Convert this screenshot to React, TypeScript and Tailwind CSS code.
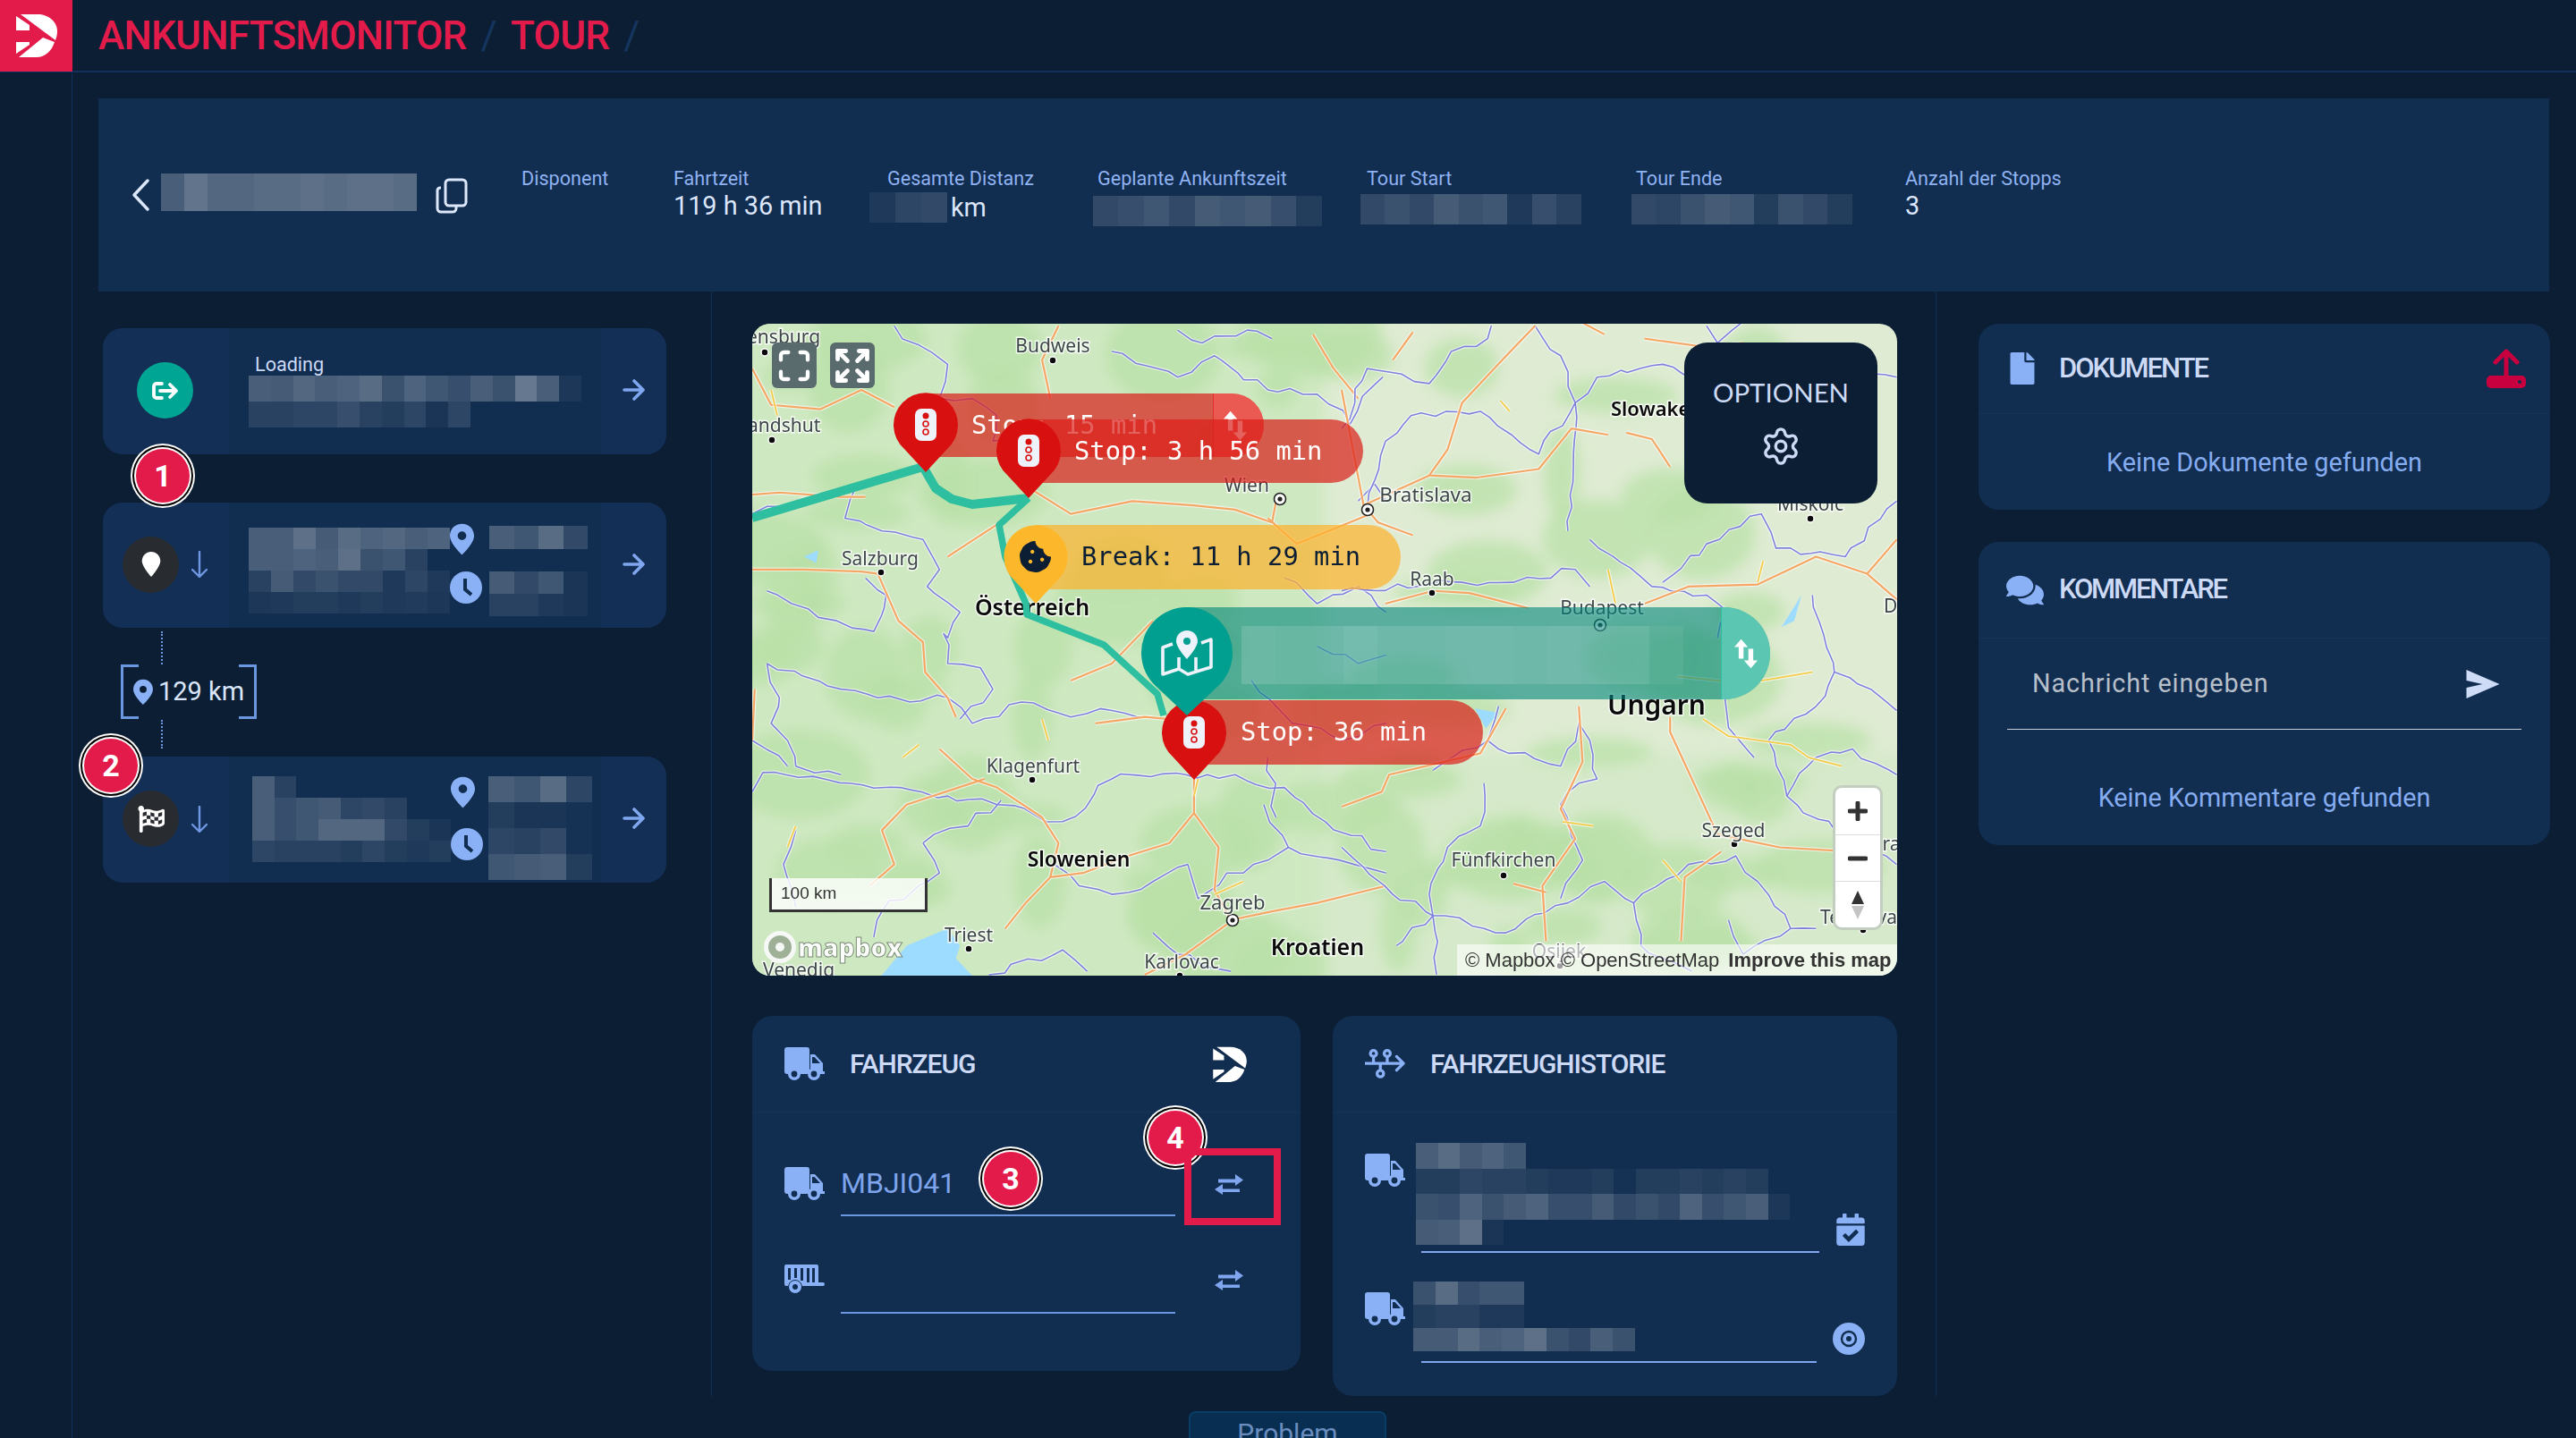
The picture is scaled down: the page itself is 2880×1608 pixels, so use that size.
import React from 'react';
import { Expand, Maximize, Settings } from 'lucide-react';
import { FaCookieBite, FaFlagCheckered, FaComments, FaFile, FaCalendarCheck } from 'react-icons/fa';

// ---- small drawings ----

const Logo = ({ className }: { className: string }) => (
  <svg viewBox="0 0 46 49" className={className} fill="currentColor">
    <path d="M5 1H24C36 1 46 9 46 20C46 24 45 27 44 30Z" />
    <path d="M0 3L15 13V19H0Z" />
    <path d="M0 32H15V35L0 45Z" />
    <path d="M30 27L43 32C40 42 32 49 23 49H3Z" />
  </svg>
);

const Truck = () => (
  <svg viewBox="0 0 45 37" className="w-[45px] h-[37px] shrink-0">
    <rect x="0" y="0" width="28" height="30" rx="3" fill="#8ab0f5" />
    <path d="M29 8H34L43 18V27H45V30H29Z" fill="#8ab0f5" />
    <path d="M31 11H33.5L40 18H31Z" fill="#112d50" />
    <circle cx="11" cy="30" r="7" fill="#8ab0f5" />
    <circle cx="11" cy="30" r="3.4" fill="#112d50" />
    <circle cx="33" cy="30" r="7" fill="#8ab0f5" />
    <circle cx="33" cy="30" r="3.4" fill="#112d50" />
  </svg>
);

const Trailer = () => (
  <svg viewBox="0 0 45 33" className="w-[45px] h-[33px] shrink-0">
    <path d="M2 0H36a2 2 0 0 1 2 2V20H43a2 2 0 0 1 0 4H8L2 24a2 2 0 0 1-2-2V2a2 2 0 0 1 2-2Z" fill="#8ab0f5" />
    <g fill="#112d50">
      <rect x="4" y="4" width="3" height="13" />
      <rect x="11" y="4" width="3" height="11" />
      <rect x="18" y="4" width="3" height="14" />
      <rect x="25" y="4" width="3" height="16" />
      <rect x="31" y="4" width="3" height="16" />
    </g>
    <circle cx="12" cy="25" r="7.5" fill="#8ab0f5" stroke="#112d50" strokeWidth="1" />
    <circle cx="12" cy="25" r="3" fill="#112d50" />
  </svg>
);

const Swap = () => (
  <svg viewBox="0 0 32 24" className="w-[32px] h-[24px]" fill="#7fa6ee">
    <path d="M4 10.5V6.5H23V1L32 7.5L23 14V10.5Z" />
    <path d="M28 13.5V17.5H9V12L0 18L9 24V21H28Z" />
  </svg>
);

const Pin = ({ className = 'w-[27px] h-[36px]' }: { className?: string }) => (
  <svg viewBox="0 0 28 36" className={className} fill="#8ab0f5">
    <path fillRule="evenodd" d="M14 0C6 0 0 6 0 14C0 23 14 36 14 36S28 23 28 14C28 6 22 0 14 0ZM14 9a5 5 0 1 1 0 10a5 5 0 0 1 0-10Z" />
  </svg>
);

const Clock = () => (
  <svg viewBox="0 0 36 36" className="w-[36px] h-[36px]">
    <circle cx="18" cy="18" r="18" fill="#8ab0f5" />
    <path d="M17 8V20L24 26" fill="none" stroke="#112d50" strokeWidth="4" />
  </svg>
);

const ArrowR = () => (
  <svg viewBox="0 0 25 24" className="w-[25px] h-[24px]" fill="none" stroke="#7fa6ee" strokeWidth="3.6" strokeLinecap="round" strokeLinejoin="round">
    <path d="M2 12H23M13 2L23 12L13 22" />
  </svg>
);

const ArrowD = () => (
  <svg viewBox="0 0 18 30" className="w-[18px] h-[30px]" fill="none" stroke="#6f97e3" strokeWidth="2.4" strokeLinecap="round" strokeLinejoin="round">
    <path d="M9 1V29M1 21L9 29L17 21" />
  </svg>
);

const SwapVert = ({ className }: { className: string }) => (
  <svg viewBox="0 0 24 30" className={className} fill="white">
    <path d="M0 8L7 0L14 8H9.5V20H4.5V8Z" />
    <path d="M14.5 10H19.5V22H24L17 30L10 22H14.5Z" />
  </svg>
);

const StopLight = () => (
  <svg viewBox="0 0 24 36" className="w-[24px] h-[36px]">
    <rect width="24" height="36" rx="7" fill="#eef2fa" />
    <circle cx="12" cy="8" r="3.5" fill="#d81010" />
    <circle cx="12" cy="17" r="3" fill="none" stroke="#d81010" strokeWidth="1.6" />
    <circle cx="12" cy="26" r="3" fill="none" stroke="#d81010" strokeWidth="1.6" />
  </svg>
);

const MarkerShape = ({ fill }: { fill: string }) => (
  <svg viewBox="0 0 72 89" className="absolute inset-0 w-full h-full">
    <path d="M36 89L12 63A36 36 0 1 1 60 63Z" fill={fill} />
  </svg>
);

const Badge = ({ n, className }: { n: number; className: string }) => (
  <div className={`absolute w-[72px] h-[72px] rounded-full bg-white p-[2px] ${className}`}>
    <div className="w-full h-full rounded-full bg-black p-[2px]">
      <div className="w-full h-full rounded-full bg-white p-[2px]">
        <div className="w-full h-full rounded-full bg-[#e31b4b] flex items-center justify-center text-white text-[34px] font-bold">{n}</div>
      </div>
    </div>
  </div>
);

// pixelated (redacted) blocks, values are white alpha in percent
const Mosaic = ({ w, h, rows, className = '' }: { w: number; h: number; rows: number[][]; className?: string }) => (
  <div className={`flex flex-col shrink-0 ${className}`}>
    {rows.map((row, i) => (
      <div key={i} className="flex">
        {row.map((a, j) => (
          <div key={j} style={{ width: w, height: h, backgroundColor: `rgba(255,255,255,${a / 100})` }} />
        ))}
      </div>
    ))}
  </div>
);

// ---- map ----

let seed = 7;
const rnd = () => {
  seed = (seed * 16807) % 2147483647;
  return seed / 2147483647;
};

// breaks a rough line into small jagged steps, borders on the map look like this
const wiggle = (line: string, step: number, amp: number) => {
  const pts = line.split(' ').map((p) => p.split(',').map(Number));
  const out: string[] = [];
  pts.forEach((p, i) => {
    out.push(`${p[0]},${p[1]}`);
    const q = pts[i + 1];
    if (!q) return;
    const n = Math.floor(Math.hypot(q[0] - p[0], q[1] - p[1]) / step);
    for (let k = 1; k < n; k++) {
      const x = p[0] + ((q[0] - p[0]) * k) / n + (rnd() - 0.5) * amp;
      const y = p[1] + ((q[1] - p[1]) * k) / n + (rnd() - 0.5) * amp;
      out.push(`${x.toFixed(1)},${y.toFixed(1)}`);
    }
  });
  return out.join(' ');
};

const roadsA = [
  '24,130 70,215 190,225 290,180 370,220',
  '24,425 90,420 240,430 300,430',
  '24,600 150,600 290,605 330,610 380,720 440,770 445,840 500,900 520,945',
  '700,410 800,470 950,440 1100,450 1200,460 1290,490 1300,440',
  '1390,50 1440,130 1500,200',
  '770,30 730,110 750,200',
  '480,1020 560,1090 620,1110 730,1180 770,1240 750,1320 690,1380 640,1440',
  '1100,1090 1100,1170 1040,1240 940,1270 830,1310 750,1320',
  '1100,1170 1160,1250 1150,1350 1190,1420 1290,1400 1400,1380 1568,1340',
  '590,1090 400,1150 340,1210 370,1290 310,1340',
  '800,860 900,820 1000,720',
  '860,960 980,945 1040,950',
  '1280,480 1350,540 1530,470',
  '24,1000 30,880',
  '500,570 620,495',
  '1180,1430 1080,1500 980,1548',
];
const bordersA = [
  '370,30 430,75 500,120 480,200 560,200 620,240 610,300 700,300',
  '24,470 280,400 250,480 340,510 440,530 480,600 450,640 530,700 500,760 490,750 500,820 580,830 610,880 530,950',
  '24,1120 50,1075 260,1100 500,1130 620,1150 780,1190 900,1090 1080,1080 1200,1080 1320,1110 1420,1190 1568,1260',
  '60,820 90,900 70,960 110,1000 130,1060 240,1080',
  '60,820 240,880 330,900 500,900 560,960 680,910 800,945 900,930 1000,945',
  '60,650 120,680 230,720 320,745 350,660 300,620',
  '440,1240 550,1200 630,1140',
  '900,90 1060,150 1150,100 1280,180 1400,190 1480,260 1560,150',
  '1270,1150 1330,1250 1490,1290 1568,1310',
  '1085,1290 1110,1370 1180,1310 1280,1280 1330,1250',
  '1000,1450 1060,1500 1190,1540',
  '600,1548 780,1490 840,1540',
  '24,1000 110,1060',
  '130,1210 100,1290 130,1390',
  '440,1240 480,1310 340,1400 320,1460',
  '1500,440 1540,400 1568,440',
  '1060,40 1120,70 1230,40 1290,60',
  '1320,620 1400,680 1500,640 1568,700',
  '1400,780 1500,820 1568,800',
  '1240,860 1340,960 1460,1000 1568,960',
  '760,1290 820,1340 900,1360 1000,1330 1085,1290',
  '1300,1180 1280,1040',
].map((l) => wiggle(l, 30, 20));
const roadsB = [
  '140,110 195,45',
  '610,0 720,50',
  '830,60 1000,80 1100,70',
  '530,30 440,110 330,210 290,320 240,380 60,450',
  '240,380 370,385 540,365 630,270 730,285',
  '780,280 850,295 900,360',
  '0,180 60,450 100,490 195,520',
  '120,680 250,650 350,655 510,690',
  '830,680 950,640 1140,635 1300,570 1440,610 1521,530',
  '1440,610 1521,670',
  '900,945 900,980 1030,1220 1200,1250 1400,1260',
  '650,920 660,1050 600,1160 640,1230 550,1340 560,1470',
  '450,925 380,1030 130,1080 110,1120 0,1155',
  '930,1470 940,1320 1040,1260',
  '470,1335 560,1355',
];
const bordersB = [
  '0,270 70,130 240,165 300,90 400,60 410,30',
  '640,210 700,150 880,120 1050,200 1210,190 1370,140 1521,150',
  '620,510 640,210 540,330 380,230 190,240 120,300 70,460',
  '680,530 850,640 1000,660 1060,700 1030,760',
  '0,650 330,630 470,630 640,600 680,640',
  '880,630 1000,540 1150,470 1190,550 1380,570 1521,440',
  '1290,660 1350,840 1300,920 1170,1000 1220,1130 1380,1230',
  '1350,840 1450,880 1521,930',
  '430,920 400,1000 430,1020 600,1060 650,960 680,1000 700,1090 650,1100 600,1150 660,1280 600,1370',
  '390,1100 380,1200 290,1250 240,1360 250,1410 450,1450 620,1380 720,1330 800,1380 950,1290 1080,1270 1140,1330 1230,1440 1300,1440',
  '0,1250 140,1360 250,1410',
  '800,1380 820,1480 960,1540',
  '1050,880 1060,970 1130,1040',
  '1380,1230 1521,1290',
  '530,30 600,100 640,210',
  '1000,30 1030,70 1100,20',
  '250,1070 400,1000',
  '150,1480 250,1410 260,1548',
  '1220,1130 1300,1040 1400,1020 1521,1080',
  '1060,1420 1100,1500 1230,1440',
].map((l) => wiggle(l, 30, 18));
const yellowB = [
  '920,850 1030,860 1150,860 1290,840',
  '990,950 1060,990 1230,1010 1280,1040 1370,1060',
  '1140,630 1155,580',
  '730,600 750,680',
  '880,1280 930,1330',
  '605,1190 690,1200',
  '435,205 460,230',
];
const yellowA = ['70,180 85,240', '130,1200 110,1250', '730,950 745,1000', '1110,1090 1100,1130', '1150,1360 1220,1330', '390,1040 430,1010'];

// forest patches, rough positions over the map
const blobs = Array.from({ length: 110 }, () => {
  const x = rnd() * 1280;
  const y = rnd() * 729;
  const west = x < 640 || y > 480;
  return { x, y, rx: 20 + rnd() * 60, ry: 14 + rnd() * 40, show: west || rnd() > 0.5 };
});

const Lines = ({ list, color, width }: { list: string[]; color: string; width: number }) => (
  <>
    {list.map((p) => (
      <polyline key={'h' + p} points={p} fill="none" stroke="#ffffff" strokeOpacity=".6" strokeWidth={width + 2.4} vectorEffect="non-scaling-stroke" strokeLinejoin="round" />
    ))}
    {list.map((p) => (
      <polyline key={p} points={p} fill="none" stroke={color} strokeWidth={width} vectorEffect="non-scaling-stroke" strokeLinejoin="round" />
    ))}
  </>
);

const Label = ({ x, y, t, s = 21, bold = false, start = false }: { x: number; y: number; t: string; s?: number; bold?: boolean; start?: boolean }) => (
  <text
    x={x}
    y={y + s * 0.36}
    textAnchor={start ? 'start' : 'middle'}
    fontSize={s}
    fontFamily="'Noto Sans', sans-serif"
    fontWeight={bold ? 600 : 400}
    fill={bold ? '#0a0a0a' : '#3c4647'}
    stroke="#ffffff"
    strokeOpacity=".8"
    strokeWidth="3"
    paintOrder="stroke"
  >
    {t}
  </text>
);

const dots = [
  [14, 32], [22, 130], [336, 41], [144, 278], [313, 510], [242, 699], [478, 729], [760, 301], [1183, 218], [1098, 582], [840, 617], [1242, 678], [903, 718],
];
const capitals = [[590, 196], [688, 208], [537, 667], [948, 337]];

const MapCanvas = () => (
  <svg viewBox="0 0 1280 729" className="absolute inset-0 w-full h-full">
    <defs>
      <filter id="soft">
        <feGaussianBlur stdDeviation="8" />
      </filter>
    </defs>
    <rect width="1280" height="729" fill="#dfecd3" />
    <g filter="url(#soft)">
      <rect x="-20" y="-20" width="660" height="770" fill="#cbe7bd" opacity=".85" />
      <rect x="620" y="480" width="700" height="300" fill="#d0e8c4" opacity=".6" />
      {blobs.filter((b) => b.show).map((b, i) => (
        <ellipse key={i} cx={b.x} cy={b.y} rx={b.rx} ry={b.ry} fill="#b9e0a8" opacity=".75" />
      ))}
    </g>
    <g transform="translate(-11,-12) scale(.459,.478)">
      <path d="M330 1560L400 1480L500 1440L530 1480L520 1510L570 1560Z" fill="#9edcff" />
      <path d="M150 570L185 555L180 585Z" fill="#9edcff" />
      <Lines list={bordersA} color="#7e82dc" width={1.6} />
      <Lines list={roadsA} color="#f5a766" width={2.2} />
      <Lines list={yellowA} color="#f4cb4a" width={1.8} />
    </g>
    <g transform="translate(659,-12) scale(.408,.478)">
      <path d="M365 925L430 935L395 972Z" fill="#9edcff" />
      <path d="M1205 735L1260 660L1240 720Z" fill="#9edcff" />
      <Lines list={bordersB} color="#7e82dc" width={1.6} />
      <Lines list={roadsB} color="#f5a766" width={2.2} />
      <Lines list={yellowB} color="#f4cb4a" width={1.8} />
    </g>
    {dots.map(([x, y]) => (
      <circle key={`${x}-${y}`} cx={x} cy={y} r="4" fill="#0a0a0a" stroke="#ffffff" strokeWidth="1.5" />
    ))}
    {capitals.map(([x, y]) => (
      <g key={`${x}-${y}`}>
        <circle cx={x} cy={y} r="6.5" fill="#ffffff" stroke="#222222" strokeWidth="1.6" />
        <circle cx={x} cy={y} r="2.6" fill="#222222" />
      </g>
    ))}
    <Label x={-6} y={14} t="ensburg" start />
    <Label x={-5} y={113} t="andshut" start />
    <Label x={336} y={24} t="Budweis" />
    <Label x={143} y={262} t="Salzburg" />
    <Label x={553} y={180} t="Wien" />
    <Label x={753} y={191} t="Bratislava" s={22.5} />
    <Label x={960} y={95} t="Slowakei" s={22} bold start />
    <Label x={1183} y={201} t="Miskolc" />
    <Label x={760} y={285} t="Raab" />
    <Label x={950} y={317} t="Budapest" />
    <Label x={1265} y={315} t="Debrecen" start />
    <Label x={313} y={317} t="Österreich" s={25} bold />
    <Label x={1011} y={426} t="Ungarn" s={30} bold />
    <Label x={314} y={494} t="Klagenfurt" />
    <Label x={1097} y={566} t="Szeged" />
    <Label x={1250} y={581} t="Arad" start />
    <Label x={365} y={599} t="Slowenien" s={23} bold />
    <Label x={840} y={599} t="Fünfkirchen" />
    <Label x={537} y={647} t="Zagreb" s={22} />
    <Label x={1194} y={663} t="Temesvar" start />
    <Label x={632} y={697} t="Kroatien" s={25} bold />
    <Label x={242} y={683} t="Triest" />
    <Label x={480} y={713} t="Karlovac" />
    <Label x={12} y={722} t="Venedig" start />
    <Label x={902} y={701} t="Osijek" />
    <polyline points="0,217 191,160 205,184 223,196 246,202 309,195" fill="none" stroke="#2dbf9f" strokeWidth="10" strokeLinejoin="round" />
    <polyline points="309,195 276,225 283,261 306,313 307,325 393,359 453,414 460,438" fill="none" stroke="#2dbf9f" strokeWidth="7.5" strokeLinejoin="round" />
  </svg>
);

const MapPanel = () => (
  <div className="relative w-[1280px] h-[729px] rounded-[20px] overflow-hidden">
    <MapCanvas />

    <div className="absolute left-[22px] top-[21px] w-[50px] h-[51px] rounded-[6px] bg-[#5a6b6e] flex items-center justify-center text-white">
      <Maximize size={40} strokeWidth={2.6} />
    </div>
    <div className="absolute left-[87px] top-[21px] w-[50px] h-[51px] rounded-[6px] bg-[#5a6b6e] flex items-center justify-center text-white">
      <Expand size={44} strokeWidth={2.6} />
    </div>

    {/* stop 15 min */}
    <div className="absolute left-[194px] top-[78px] w-[378px] h-[71px] rounded-r-[36px] bg-[#da1e18]/70 overflow-hidden flex items-center pl-[51px] text-white font-['DejaVu_Sans_Mono',monospace] text-[28.8px] whitespace-nowrap">
      Stop: 15 min
      <div className="absolute right-0 top-0 h-full w-[57px] bg-[#ff5a5a]/50 border-l border-[#e03030] flex items-center justify-center pr-[8px]">
        <SwapVert className="w-[26px] h-[34px]" />
      </div>
    </div>
    <div className="absolute left-[158px] top-[77px] w-[72px] h-[89px]">
      <MarkerShape fill="#d81010" />
      <div className="absolute left-[24px] top-[18px]"><StopLight /></div>
    </div>

    {/* stop 3 h 56 min */}
    <div className="absolute left-[309px] top-[107px] w-[374px] h-[71px] rounded-r-[36px] bg-[#da1e18]/70 flex items-center pl-[51px] text-white font-['DejaVu_Sans_Mono',monospace] text-[28.8px] whitespace-nowrap">
      Stop: 3 h 56 min
    </div>
    <div className="absolute left-[273px] top-[106px] w-[72px] h-[89px]">
      <MarkerShape fill="#d81010" />
      <div className="absolute left-[24px] top-[18px]"><StopLight /></div>
    </div>

    {/* break */}
    <div className="absolute left-[317px] top-[225px] w-[408px] h-[72px] rounded-r-[36px] bg-[#feb22c]/70 flex items-center pl-[51px] text-[#0b1e34] font-['DejaVu_Sans_Mono',monospace] text-[28.8px] whitespace-nowrap">
      Break: 11 h 29 min
    </div>
    <div className="absolute left-[281px] top-[225px] w-[72px] h-[88px]">
      <MarkerShape fill="#fdb72b" />
      <FaCookieBite className="absolute left-[18px] top-[18px] text-[35px] text-[#0b1e34]" />
    </div>

    {/* stop 36 min */}
    <div className="absolute left-[494px] top-[421px] w-[323px] h-[72px] rounded-r-[36px] bg-[#da1e18]/70 flex items-center pl-[52px] text-white font-['DejaVu_Sans_Mono',monospace] text-[28.8px] whitespace-nowrap">
      Stop: 36 min
    </div>
    <div className="absolute left-[458px] top-[421px] w-[72px] h-[89px]">
      <MarkerShape fill="#d81010" />
      <div className="absolute left-[24px] top-[18px]"><StopLight /></div>
    </div>

    {/* destination */}
    <div className="absolute left-[486px] top-[317px] w-[652px] h-[103px] rounded-r-[52px] bg-[#008679]/60 overflow-hidden">
      <Mosaic
        w={38}
        h={65}
        className="absolute left-[61px] top-[21px]"
        rows={[[14, 12, 12, 16, 12, 12, 14, 14, 12, 14, 13, 12, 6]]}
      />
      <div className="absolute right-0 top-0 h-full w-[55px] bg-[#5ccab6]/90 border-l border-[#2dbf9f] flex items-center justify-center">
        <SwapVert className="w-[26px] h-[34px]" />
      </div>
    </div>
    <div className="absolute left-[435px] top-[317px] w-[102px] h-[121px]">
      <svg viewBox="0 0 102 121" className="absolute inset-0 w-full h-full">
        <path d="M51 121L17 89A51 51 0 1 1 85 89Z" fill="#009f8f" />
      </svg>
      <svg viewBox="0 0 58 51" className="absolute left-[22px] top-[26px] w-[58px] h-[51px]">
        <path d="M13 15L2 19V49L20 43L30 49L56 41V10L45 14M20 30V43M39 30V45" fill="none" stroke="#eef3fb" strokeWidth="3.6" strokeLinejoin="round" />
        <path fillRule="evenodd" d="M29 0C22 0 17 5 17 12C17 19 29 32 29 32S41 19 41 12C41 5 36 0 29 0ZM29 8a4 4 0 1 1 0 8a4 4 0 0 1 0-8Z" fill="#eef3fb" />
      </svg>
    </div>

    {/* options */}
    <div className="absolute left-[1042px] top-[21px] w-[216px] h-[180px] rounded-[26px] bg-[#0b1e34] flex flex-col items-center pt-[38px] text-[#cddaf6]">
      <span className="text-[29.4px] leading-[36px] font-['Lato',sans-serif]">OPTIONEN</span>
      <Settings size={46} strokeWidth={1.8} className="mt-[19px]" />
    </div>

    {/* zoom controls */}
    <div className="absolute left-[1208px] top-[516px] w-[56px] h-[162px] rounded-[10px] bg-white border-[3px] border-[#c4cec0] flex flex-col items-center text-[#333333]">
      <div className="h-[53px] w-full flex items-center justify-center border-b border-[#dddddd]">
        <svg viewBox="0 0 22 22" className="w-[22px] h-[22px]"><path d="M11 2V20M2 11H20" stroke="#333333" strokeWidth="5" strokeLinecap="round" /></svg>
      </div>
      <div className="h-[52px] w-full flex items-center justify-center border-b border-[#dddddd]">
        <svg viewBox="0 0 22 6" className="w-[22px] h-[6px]"><path d="M2 3H20" stroke="#333333" strokeWidth="5" strokeLinecap="round" /></svg>
      </div>
      <div className="flex-1 w-full flex items-center justify-center">
        <svg viewBox="0 0 14 32" className="w-[14px] h-[32px]">
          <path d="M7 0L14 15H0Z" fill="#333333" />
          <path d="M7 32L14 17H0Z" fill="#c4c4c4" />
        </svg>
      </div>
    </div>

    {/* scale */}
    <div className="absolute left-[19px] top-[620px] w-[177px] h-[38px] bg-white/80 border-x-[3px] border-b-[3px] border-[#333333] pl-[10px] text-[19px] leading-[34px] text-[#333333] font-['Liberation_Sans',sans-serif]">
      100 km
    </div>

    {/* mapbox logo */}
    <div className="absolute left-[13px] top-[679px] flex items-center">
      <div className="w-[36px] h-[36px] rounded-full border-[5px] border-white/90 bg-[#8a9a85]/70 flex items-center justify-center">
        <div className="w-[10px] h-[10px] rounded-full bg-white/90" />
      </div>
      <span className="ml-[2px] text-[28px] leading-[36px] font-extrabold text-white/90 font-['Open_Sans',sans-serif] [-webkit-text-stroke:1px_#7d8c7a]">mapbox</span>
    </div>

    {/* attribution */}
    <div className="absolute left-[788px] top-[694px] w-[492px] h-[35px] bg-white/60 pl-[9px] flex items-center gap-[10px] text-[22px] text-[#333333] font-['Liberation_Sans',sans-serif] whitespace-nowrap">
      <span>© Mapbox © OpenStreetMap</span>
      <span className="font-bold">Improve this map</span>
    </div>
  </div>
);

// ---- left column ----

const StopCard = ({ icon, className = 'h-[141px]', children }: { icon: React.ReactNode; className?: string; children: React.ReactNode }) => (
  <div className={`flex w-[630px] rounded-[22px] bg-[#112d50] overflow-hidden ${className}`}>
    <div className="w-[141px] pb-[2px] bg-[#132f55] flex items-center shrink-0">{icon}</div>
    <div className="flex-1 flex min-w-0">{children}</div>
    <div className="w-[73px] pb-[3px] bg-[#132f55] flex items-center justify-center shrink-0">
      <ArrowR />
    </div>
  </div>
);

const StopIcon = ({ children }: { children: React.ReactNode }) => (
  <div className="flex items-center">
    <div className="ml-[22px] w-[63px] h-[63px] rounded-full bg-[#282b30] flex items-center justify-center text-white">{children}</div>
    <div className="ml-[14px]"><ArrowD /></div>
  </div>
);

const Divider = () => <div className="ml-[65px] w-0 border-l-2 border-dotted border-[#6f97e3]" />;

const Corner = ({ className }: { className: string }) => (
  <div className={`absolute top-0 bottom-0 w-[20px] border-y-[3px] border-[#6b96e0] ${className}`} />
);

const Line = ({ className }: { className: string }) => <div className={`h-[2px] bg-[#7fa6ee] ${className}`} />;

const HeadField = ({ label, w, children }: { label: string; w: string; children?: React.ReactNode }) => (
  <div className={`${w} shrink-0`}>
    <div className="text-[21.6px] leading-[28px] text-[#8fb2f2] whitespace-nowrap">{label}</div>
    <div className="text-[28.8px] leading-[32px] text-[#dbe6fb] whitespace-nowrap">{children}</div>
  </div>
);

export default function App() {
  return (
    <div className="relative w-[2880px] h-[1608px] overflow-hidden bg-[#0b1e34] font-['Roboto',sans-serif]">
      <header className="flex items-center h-[81px] border-b-2 border-[#12315a]">
        <div className="w-[81px] h-[81px] bg-[#e31b4b] flex items-center justify-center text-white shrink-0">
          <Logo className="w-[46px] h-[49px]" />
        </div>
        <h1 className="ml-[29px] flex items-center text-[44px] leading-none font-medium text-[#e31b4b] tracking-[-0.7px] whitespace-nowrap">
          ANKUNFTSMONITOR
          <span className="mx-[16px] font-normal text-[#15355f]">/</span>
          TOUR
          <span className="mx-[16px] font-normal text-[#15355f]">/</span>
        </h1>
      </header>

      <div className="flex h-[1527px]">
        <aside className="w-[81px] h-full border-r border-[#12315a] shrink-0" />
        <main className="flex-1 pt-[29px]">
          <section className="ml-[29px] mr-[30px] h-[216px] bg-[#112d50] flex items-start pt-[76px]">
            <svg viewBox="0 0 20 36" className="ml-[37px] mt-[14px] w-[20px] h-[36px] shrink-0" fill="none" stroke="#dce7fa" strokeWidth="3.4" strokeLinecap="round" strokeLinejoin="round">
              <path d="M18 2L3 18L18 34" />
            </svg>
            <Mosaic w={26} h={42} className="ml-[13px] mt-[8px]" rows={[[24, 34, 28, 28, 30, 30, 32, 30, 32, 32, 30]]} />
            <svg viewBox="0 0 36 40" className="ml-[21px] mt-[13px] w-[36px] h-[40px] shrink-0" fill="none" stroke="#dce7fa" strokeWidth="3" strokeLinejoin="round">
              <rect x="11" y="2" width="23" height="29" rx="4" />
              <path d="M6 11H5a3 3 0 0 0-3 3V34a4 4 0 0 0 4 4H19a4 4 0 0 0 4-4V32" />
            </svg>
            <div className="ml-[60px] flex">
              <HeadField label="Disponent" w="w-[170px]" />
              <HeadField label="Fahrtzeit" w="w-[239px]">119 h 36 min</HeadField>
              <HeadField label="Gesamte Distanz" w="w-[235px]">
                <div className="flex items-center -ml-[20px] mt-[1px]">
                  <Mosaic w={29} h={34} rows={[[6, 12, 14]]} />
                  <span className="ml-[4px]">km</span>
                </div>
              </HeadField>
              <HeadField label="Geplante Ankunftszeit" w="w-[301px]">
                <Mosaic w={28.4} h={34} className="-ml-[5px] mt-[5px]" rows={[[14, 16, 20, 14, 22, 20, 22, 16, 8]]} />
              </HeadField>
              <HeadField label="Tour Start" w="w-[301px]">
                <Mosaic w={27.4} h={34} className="-ml-[7px] mt-[3px]" rows={[[14, 18, 14, 22, 18, 20, 6, 16, 10]]} />
              </HeadField>
              <HeadField label="Tour Ende" w="w-[301px]">
                <Mosaic w={27.4} h={34} className="-ml-[5px] mt-[3px]" rows={[[14, 12, 18, 22, 20, 8, 18, 14, 8]]} />
              </HeadField>
              <HeadField label="Anzahl der Stopps" w="w-[240px]">3</HeadField>
            </div>
          </section>

          <div className="flex h-[1235px]">
            {/* tour stops */}
            <div className="w-[715px] shrink-0 border-r border-[#12315a] pl-[34px] pt-[41px]">
              <StopCard
                icon={
                  <div className="ml-[38px] w-[63px] h-[63px] rounded-full bg-[#00a693] flex items-center justify-center">
                    <svg viewBox="0 0 30 20" className="w-[30px] h-[20px]" fill="none" stroke="white" strokeWidth="3.8" strokeLinecap="round" strokeLinejoin="round">
                      <path d="M11 2H5a3 3 0 0 0-3 3V15a3 3 0 0 0 3 3H11M9 10H27M20 3L27 10L20 17" />
                    </svg>
                  </div>
                }
              >
                <div className="pl-[22px] pt-[28px]">
                  <div className="pl-[7px] text-[21.6px] leading-[25px] text-[#cddaf6]">Loading</div>
                  <Mosaic
                    w={24.8}
                    h={29}
                    rows={[
                      [24, 22, 28, 24, 26, 30, 18, 26, 20, 16, 24, 18, 36, 24, 5],
                      [10, 10, 12, 12, 16, 10, 8, 12, 4, 12],
                    ]}
                  />
                </div>
              </StopCard>

              <div className="mt-[54px]">
                <StopCard
                  className="h-[140px]"
                  icon={
                    <StopIcon>
                      <svg viewBox="0 0 22 30" className="w-[22px] h-[28px]" fill="white">
                        <path d="M11 0C5 0 0 5 0 11C0 18 11 30 11 30S22 18 22 11C22 5 17 0 11 0Z" />
                      </svg>
                    </StopIcon>
                  }
                >
                  <Mosaic
                    w={25}
                    h={24}
                    className="ml-[22px] mt-[28px]"
                    rows={[
                      [24, 24, 32, 22, 30, 26, 28, 24, 26],
                      [24, 24, 26, 24, 32, 18, 20, 10, 0],
                      [10, 22, 14, 18, 14, 14, 6, 12, 6],
                      [5, 6, 8, 8, 6, 8, 6, 7, 5],
                    ]}
                  />
                  <div className="pt-[23px]">
                    <div className="flex items-start h-[54px]">
                      <div className="w-[44px]"><Pin /></div>
                      <Mosaic w={27.5} h={26} className="mt-[3px]" rows={[[24, 20, 30, 14]]} />
                    </div>
                    <div className="flex items-start">
                      <div className="w-[44px]"><Clock /></div>
                      <Mosaic w={27.5} h={25} rows={[[22, 14, 20, 4], [10, 10, 6, 4]]} />
                    </div>
                  </div>
                </StopCard>
              </div>

              <div className="mt-[4px] h-[37px] flex"><Divider /></div>
              <div className="relative ml-[20px] w-[152px] h-[61px] flex items-center justify-center gap-[6px]">
                <Corner className="left-0 border-l-[3px]" />
                <Corner className="right-0 border-r-[3px]" />
                <Pin className="w-[22px] h-[30px]" />
                <span className="text-[29px] text-[#dbe6fb] leading-none whitespace-nowrap">129 km</span>
              </div>
              <div className="mt-[1px] h-[32px] flex"><Divider /></div>

              <div className="mt-[9px]">
                <StopCard
                  icon={
                    <StopIcon>
                      <FaFlagCheckered className="text-[30px] text-white" />
                    </StopIcon>
                  }
                >
                  <Mosaic
                    w={24.7}
                    h={24}
                    className="ml-[26px] mt-[22px]"
                    rows={[
                      [24, 10, 0, 0, 0, 0, 0, 0, 0],
                      [24, 16, 20, 22, 12, 14, 10, 0, 0],
                      [24, 16, 20, 28, 28, 28, 14, 8, 4],
                      [12, 10, 10, 10, 8, 12, 8, 6, 8],
                    ]}
                  />
                  <div className="pt-[22px]">
                    <div className="flex items-start h-[58px]">
                      <div className="w-[42px]"><Pin /></div>
                      <Mosaic w={29} h={29} rows={[[24, 20, 30, 12], [8, 4, 4, 2]]} />
                    </div>
                    <div className="flex items-start">
                      <div className="w-[42px]"><Clock /></div>
                      <Mosaic w={29} h={29} rows={[[12, 10, 14, 2], [20, 22, 24, 8]]} />
                    </div>
                  </div>
                </StopCard>
              </div>
            </div>

            {/* map and vehicle */}
            <div className="w-[1369px] shrink-0 border-r border-[#12315a] pl-[45px] pt-[36px]">
              <MapPanel />
              <div className="mt-[45px] flex items-start gap-[36px]">
                <div className="w-[613px] h-[397px] rounded-[22px] bg-[#112d50]">
                  <div className="h-[108px] border-b border-[#15335a] pl-[36px] pr-[60px] flex items-center">
                    <Truck />
                    <span className="ml-[28px] text-[30px] font-medium text-[#cddaf6] tracking-[-1.1px]">FAHRZEUG</span>
                    <Logo className="ml-auto w-[38px] h-[40px] text-white" />
                  </div>
                  <div className="pl-[36px] pt-[58px]">
                    <div className="flex items-start">
                      <div className="pt-[3px]"><Truck /></div>
                      <div className="ml-[18px] w-[374px] h-[58px] border-b-2 border-[#6b96e0] text-[32px] leading-[42px] text-[#7ea4ec]">MBJI041</div>
                      <div className="ml-[44px] pt-[10px]"><Swap /></div>
                    </div>
                    <div className="mt-[51px] flex items-start">
                      <div className="pt-[3px]"><Trailer /></div>
                      <div className="ml-[18px] w-[374px] h-[58px] border-b-2 border-[#6b96e0]" />
                      <div className="ml-[44px] pt-[8px]"><Swap /></div>
                    </div>
                  </div>
                </div>

                <div className="w-[631px] h-[425px] rounded-[22px] bg-[#112d50]">
                  <div className="h-[108px] border-b border-[#15335a] pl-[36px] flex items-center">
                    <svg viewBox="0 0 48 36" className="w-[46px] h-[36px]" fill="none" stroke="#8ab0f5" strokeWidth="3.4" strokeLinecap="round" strokeLinejoin="round">
                      <path d="M1 17H45M37 9L45 17L37 25M10 9V17M26 9V17M18 17V25" />
                      <circle cx="10" cy="5.5" r="3.6" />
                      <circle cx="26" cy="5.5" r="3.6" />
                      <circle cx="18" cy="29" r="3.8" />
                    </svg>
                    <span className="ml-[27px] text-[30px] font-medium text-[#cddaf6] tracking-[-1.1px]">FAHRZEUGHISTORIE</span>
                  </div>
                  <div className="pl-[36px] pt-[34px]">
                    <div className="flex items-start">
                      <div className="pt-[12px]"><Truck /></div>
                      <div className="relative ml-[12px] w-[451px] h-[123px]">
                        <Mosaic
                          w={24.6}
                          h={28.5}
                          rows={[
                            [24, 30, 22, 26, 20],
                            [8, 8, 12, 10, 10, 8, 6, 6, 8, 2, 8, 8, 10, 8, 10, 8],
                            [18, 16, 26, 18, 22, 26, 16, 16, 22, 14, 18, 14, 26, 16, 20, 24, 5],
                            [22, 24, 32, 4],
                          ]}
                        />
                        <Line className="absolute left-[6px] right-0 bottom-0" />
                        <FaCalendarCheck className="absolute left-[468px] top-[79px] text-[36px] text-[#8ab0f5]" />
                      </div>
                    </div>
                    <div className="mt-[32px] flex items-start">
                      <div className="pt-[12px]"><Truck /></div>
                      <div className="relative ml-[12px] w-[451px] h-[91px]">
                        <Mosaic
                          w={24.8}
                          h={26}
                          className="-ml-[3px]"
                          rows={[
                            [18, 30, 16, 20, 20],
                            [8, 10, 10, 6, 6],
                            [22, 22, 30, 24, 26, 32, 18, 14, 24, 18],
                          ]}
                        />
                        <Line className="absolute left-[6px] right-[3px] bottom-0" />
                        <svg viewBox="0 0 36 36" className="absolute left-[466px] top-[46px] w-[36px] h-[36px]">
                          <circle cx="18" cy="18" r="18" fill="#8ab0f5" />
                          <circle cx="18" cy="18" r="8" fill="none" stroke="#112d50" strokeWidth="2.4" />
                          <circle cx="18" cy="18" r="3" fill="#112d50" />
                        </svg>
                      </div>
                    </div>
                  </div>
                </div>
              </div>
              <div className="mt-[17px] ml-[488px] w-[221px] h-[60px] rounded-t-[8px] bg-[#082f52] border-t-2 border-x-2 border-[#0a3d66] text-center text-[30px] leading-[46px] text-[#6a8cbe]">
                Problem
              </div>
            </div>

            {/* documents and comments */}
            <div className="flex-1 pl-[47px] pt-[36px]">
              <div className="w-[639px] h-[208px] rounded-[22px] bg-[#112d50]">
                <div className="h-[101px] border-b border-[#15335a] pl-[35px] pr-[27px] flex items-center">
                  <FaFile className="text-[36px] text-[#8ab0f5] w-[28px]" />
                  <span className="ml-[27px] text-[31px] font-medium text-[#cddaf6] tracking-[-2px]">DOKUMENTE</span>
                  <svg viewBox="0 0 44 44" className="ml-auto w-[44px] h-[44px]">
                    <rect x="0" y="30" width="44" height="14" rx="5" fill="#c8003f" />
                    <path d="M22 4V32M10 15L22 3L34 15" fill="none" stroke="#c8003f" strokeWidth="5" strokeLinecap="round" strokeLinejoin="round" />
                    <circle cx="37" cy="37" r="2" fill="#112d50" />
                  </svg>
                </div>
                <div className="h-[106px] pt-[3px] flex items-center justify-center text-[28.8px] text-[#86acf0]">Keine Dokumente gefunden</div>
              </div>

              <div className="mt-[36px] w-[639px] h-[339px] rounded-[22px] bg-[#112d50]">
                <div className="h-[108px] border-b border-[#15335a] pl-[31px] flex items-center">
                  <FaComments className="text-[40px] text-[#8ab0f5] w-[42px]" />
                  <span className="ml-[17px] text-[31px] font-medium text-[#cddaf6] tracking-[-2.2px]">KOMMENTARE</span>
                </div>
                <div className="mx-[32px] h-[102px] border-b border-[#c6cfd8] pl-[28px] pr-[24px] flex items-center justify-between">
                  <span className="pt-[1px] text-[28.8px] tracking-[0.9px] text-[#b7bfc9]">Nachricht eingeben</span>
                  <svg viewBox="0 0 37 32" className="w-[38px] h-[32px]" fill="#cfdcf7">
                    <path d="M0 0L37 16L0 32V20L18 16L0 12Z" />
                  </svg>
                </div>
                <div className="pt-[58px] text-center text-[28.8px] leading-[36px] text-[#86acf0]">Keine Kommentare gefunden</div>
              </div>
            </div>
          </div>
        </main>
      </div>

      {/* tutorial marks over the page */}
      <Badge n={1} className="left-[146px] top-[496px]" />
      <Badge n={2} className="left-[88px] top-[820px]" />
      <Badge n={3} className="left-[1094px] top-[1282px]" />
      <Badge n={4} className="left-[1278px] top-[1236px]" />
      <div className="absolute left-[1324px] top-[1284px] w-[108px] h-[86px] border-[8px] border-[#e31b4b]" />
    </div>
  );
}
